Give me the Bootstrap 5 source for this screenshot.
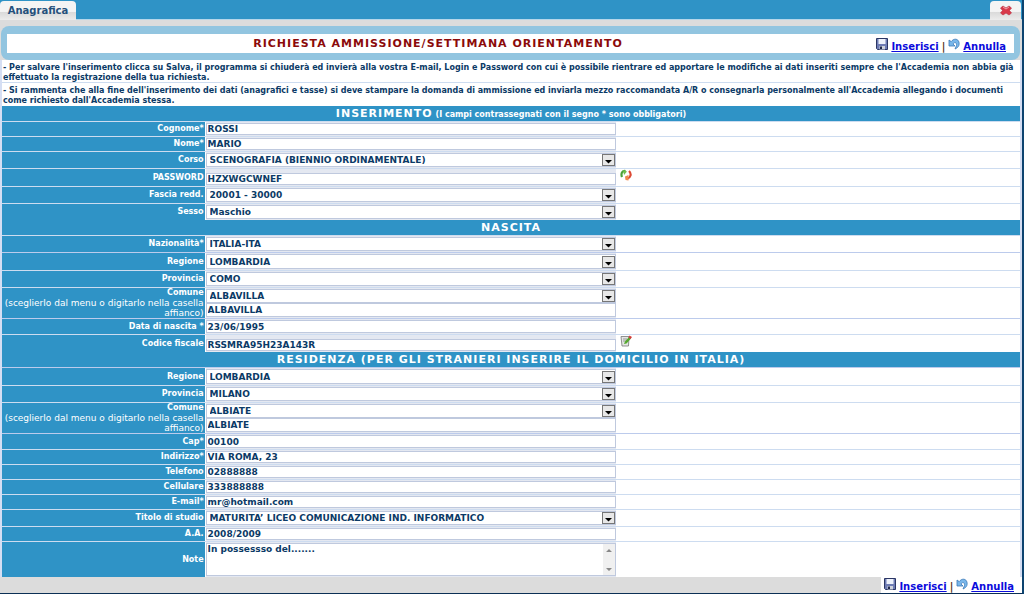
<!DOCTYPE html>
<html lang="it">
<head>
<meta charset="utf-8">
<meta name="viewport" content="width=device-width, initial-scale=1">
<title>Anagrafica</title>
<link href="https://cdn.jsdelivr.net/npm/bootstrap@5.3.0/dist/css/bootstrap.min.css" rel="stylesheet">
<style>
:root { --blue: #2f93c6; --rule: #cddcf0; --ink: #0b3a66; }
body { background: #dcdcdc; color: var(--ink); font: bold 9px/10px "DejaVu Sans", Verdana, sans-serif; }
.shell { border-right: 2px solid #0d4470; border-bottom: 2px solid #0b2f55; }
.topbar { background: var(--blue); height: 20px; border-bottom: 1px solid #b4d6ea; }
.tab-btn { height: 19px; margin-top: 1px; border: 0; border-radius: 4px 4px 0 0; background: linear-gradient(#f4f4f4 0 55%, #dadada 60%, #ececec); color: #24507c; font-weight: bold; font-size: 10px; line-height: 12px; }
.tab-page { width: 76px; }
.tab-close { width: 31px; margin-right: 1px; }
.title-frame { background: #92c5e0; border-radius: 8px; margin: 6px 2px 0 1px; padding: 8px 6px 7px; }
.title-box { background: #fff; height: 19px; display: grid; grid-template-columns: 1fr 145px; align-items: center; }
.title-box h1 { color: #8b0a0a; font-size: 11px; line-height: 14px; letter-spacing: 1px; font-weight: bold; }
.title-box .actions { align-self: end; }
.sheet { background: #fff; border: solid #d5def3; border-width: 0 2px; }
.notice { padding: 3px 1px 0; height: 23px; font-size: 8px; border-bottom: 1px solid var(--rule); }
.notice:last-of-type { border-bottom: 0; }
.section-bar { background: var(--blue); color: #fff; height: 15px; font-size: 8px; line-height: 15px; font-weight: bold; }
.section-bar b { font-size: 11px; letter-spacing: 1px; }
.section-bar small { font-size: 8px; }
.frow { display: grid; grid-template-columns: 20% calc(40% + 3px) 1fr; min-height: 15px; border-top: 1px solid var(--rule); }
.frow-pick { min-height: 17px; }
.frow > label { background: var(--blue); color: #fff; display: flex; flex-direction: column; justify-content: center; text-align: right; padding-right: 1px; margin-right: 1px; font-size: 8px; }
.frow > label span { font-weight: normal; font-size: 9px; }
.fcell { background: #e4e8f1; padding: 1px 0; display: flex; flex-direction: column; }
.fcell > * { flex: 1 1 0; min-height: 12px; width: 100%; border: 1px solid #bfc9de; border-radius: 0; background-color: #fff; color: var(--ink); font: bold 9px/10px "DejaVu Sans", Verdana, sans-serif; padding: 0 1px; outline: 0; }
.fcell > select { appearance: none; padding: 0 16px 0 3px; background: #fff url("data:image/svg+xml,%3Csvg xmlns='http://www.w3.org/2000/svg' width='13' height='12'%3E%3Crect x='.5' y='.5' width='12' height='11' fill='%23e8e8e8' stroke='%23777'/%3E%3Cpath d='M3 6h7L6.500 9.500z' fill='%23000'/%3E%3C/svg%3E") no-repeat right center; }
.fcell > textarea { flex: none; display: block; resize: none; overflow: hidden; height: 33px; background: url("data:image/svg+xml,%3Csvg xmlns='http://www.w3.org/2000/svg' width='12' height='31'%3E%3Cpath d='M0 0h12v31H0z' fill='%23f0f0f0'/%3E%3Cpath d='M3 8h6L6 5zM3 24h6l-3 3z' fill='%23888'/%3E%3C/svg%3E") no-repeat right center #fff; }
.group-box { border: 1px solid #bccbec; border-width: 1px 0; }
.group-box .frow:first-child { border-top: 0; }
.side-btn { border: 0; background: none; padding: 0; margin-left: 4px; line-height: 0; justify-self: start; align-self: start; }
.actions { background: #fff; font-size: 10px; line-height: 12px; gap: 3px; color: #532; }
.actions a { color: #0b0bdc; text-decoration: underline; }
.actions svg { margin-bottom: 3px; }
.footer-bar { height: 16px; }
.footer-bar .actions { padding: 1px 8px 0 3px; }
</style>
</head>
<body>
<svg class="d-none">
  <symbol id="disk" viewBox="0 0 12 12"><path d="M.5.500h11v11H1.500l-1-1z" fill="#6e7cb4" stroke="#2b3664"/><path d="M2.500 1h7v5h-7z" fill="#eef2fb"/><path d="M3.500 8h5.500v3.500H3.500z" fill="#cfd3dc"/><path d="M4 8.500h2v2.500H4z" fill="#20284c"/></symbol>
  <symbol id="undo" viewBox="0 0 12 12"><path d="M1 2v6h6L5 6c1.500-2.500 4-1.500 3.500 1.500L7 11c4-1.500 5-5 3.500-8C9 .5 5.500.500 3.200 3.600z" fill="#79b7ea" stroke="#3a78b8" stroke-width=".8"/></symbol>
</svg>
<div class="shell">
  <header class="topbar d-flex justify-content-between">
    <button type="button" class="tab-btn tab-page p-0">Anagrafica</button>
    <button type="button" class="tab-btn tab-close p-0" aria-label="Chiudi">
      <svg width="12" height="11" viewBox="0 0 12 11"><path d="M3 1l3 2 3-2 2.500 2-2 2.500 2 2.500L9 10 6 8l-3 2-2.500-2 2-2.500-2-2.500z" fill="#d9394a" stroke="#b82c3c" stroke-width=".6"/><path d="M3 2l3 2 3-2" stroke="#f3a0a6" fill="none"/></svg>
    </button>
  </header>
  <main>
    <div class="title-frame">
      <div class="title-box">
        <h1 class="m-0 text-center">RICHIESTA AMMISSIONE/SETTIMANA ORIENTAMENTO</h1>
        <div class="actions d-flex align-items-end justify-content-end pe-2">
          <svg width="12" height="12"><use href="#disk"/></svg><a href="#">Inserisci</a>|<svg width="12" height="12"><use href="#undo"/></svg><a href="#">Annulla</a>
        </div>
      </div>
    </div>
    <form class="sheet" onsubmit="return false">
      <p class="notice m-0">- Per salvare l'inserimento clicca su Salva, il programma si chiuderà ed invierà alla vostra E-mail, Login e Password con cui è possibile rientrare ed apportare le modifiche ai dati inseriti sempre che l'Accademia non abbia già effettuato la registrazione della tua richiesta.</p>
      <p class="notice m-0">- Si rammenta che alla fine dell'inserimento dei dati (anagrafici e tasse) si deve stampare la domanda di ammissione ed inviarla mezzo raccomandata A/R o consegnarla personalmente all'Accademia allegando i documenti come richiesto dall'Accademia stessa.</p>
      <h2 class="section-bar m-0 text-center"><b>INSERIMENTO</b> <small>(I campi contrassegnati con il segno * sono obbligatori)</small></h2>
      <div class="frow"><label for="cognome">Cognome*</label><div class="fcell"><input id="cognome" value="ROSSI"></div></div>
      <div class="frow"><label for="nome">Nome*</label><div class="fcell"><input id="nome" value="MARIO"></div></div>
      <div class="frow frow-pick"><label for="corso">Corso</label><div class="fcell"><select id="corso"><option>SCENOGRAFIA (BIENNIO ORDINAMENTALE)</option></select></div></div>
      <div class="frow frow-pick"><label for="pwd">PASSWORD</label><div class="fcell pt-1"><input id="pwd" value="HZXWGCWNEF"></div>
        <button type="button" class="side-btn" aria-label="Rigenera password"><svg width="12" height="12" viewBox="0 0 12 12" fill="none"><path d="M2 8C.5 4 2.500 1.500 5.500 2" stroke="#4ba33c" stroke-width="2.200"/><path d="M3 1l4 1.500L4 6z" fill="#6fbf4c"/><path d="M9 2C12 5 10.500 8.500 7.500 9.500" stroke="#dd4a35" stroke-width="2.200"/><path d="M5 7.500L8.500 6v5.500L5.500 11z" fill="#ef8a4e"/></svg></button></div>
      <div class="frow frow-pick"><label for="fascia">Fascia redd.</label><div class="fcell"><select id="fascia"><option>20001 - 30000</option></select></div></div>
      <div class="frow frow-pick"><label for="sesso">Sesso</label><div class="fcell"><select id="sesso"><option>Maschio</option></select></div></div>
      <h2 class="section-bar m-0 text-center"><b>NASCITA</b></h2>
      <div class="frow frow-pick"><label for="naz">Nazionalità*</label><div class="fcell"><select id="naz"><option>ITALIA-ITA</option></select></div></div>
      <div class="group-box">
        <div class="frow frow-pick"><label for="nreg">Regione</label><div class="fcell"><select id="nreg"><option>LOMBARDIA</option></select></div></div>
        <div class="frow frow-pick"><label for="nprov">Provincia</label><div class="fcell"><select id="nprov"><option>COMO</option></select></div></div>
        <div class="frow"><label for="ncom">Comune<span>(sceglierlo dal menu o digitarlo nella casella affianco)</span></label><div class="fcell"><select id="ncom"><option>ALBAVILLA</option></select><input aria-label="Comune di nascita" value="ALBAVILLA"></div></div>
      </div>
      <div class="frow border-0"><label for="data">Data di nascita *</label><div class="fcell"><input id="data" value="23/06/1995"></div></div>
      <div class="frow frow-pick"><label for="cf">Codice fiscale</label><div class="fcell pt-1"><input id="cf" value="RSSMRA95H23A143R"></div>
        <button type="button" class="side-btn" aria-label="Calcola codice fiscale"><svg width="12" height="12" viewBox="0 0 12 12"><path d="M1 1.500h8l-.5 9.500H2z" fill="#e4e6e4" stroke="#777" stroke-width=".8"/><path d="M3 4h4M3 6h3" stroke="#999"/><path d="M4 9l1-2.500L9 2l2 1.500L6.500 8.500z" fill="#55a82f"/><path d="M8.500 2.500l1-2 2.500 1.500-1.500 2z" fill="#d33b3b"/></svg></button></div>
      <h2 class="section-bar m-0 text-center"><b>RESIDENZA (PER GLI STRANIERI INSERIRE IL DOMICILIO IN ITALIA)</b></h2>
      <div class="group-box">
        <div class="frow frow-pick"><label for="rreg">Regione</label><div class="fcell"><select id="rreg"><option>LOMBARDIA</option></select></div></div>
        <div class="frow frow-pick"><label for="rprov">Provincia</label><div class="fcell"><select id="rprov"><option>MILANO</option></select></div></div>
        <div class="frow"><label for="rcom">Comune<span>(sceglierlo dal menu o digitarlo nella casella affianco)</span></label><div class="fcell"><select id="rcom"><option>ALBIATE</option></select><input aria-label="Comune di residenza" value="ALBIATE"></div></div>
      </div>
      <div class="frow border-0"><label for="cap">Cap*</label><div class="fcell"><input id="cap" value="00100"></div></div>
      <div class="frow"><label for="ind">Indirizzo*</label><div class="fcell"><input id="ind" value="VIA ROMA, 23"></div></div>
      <div class="frow"><label for="tel">Telefono</label><div class="fcell"><input id="tel" value="02888888"></div></div>
      <div class="frow"><label for="cell">Cellulare</label><div class="fcell"><input id="cell" value="333888888"></div></div>
      <div class="frow"><label for="mail">E-mail*</label><div class="fcell"><input id="mail" value="mr@hotmail.com"></div></div>
      <div class="frow frow-pick"><label for="titolo">Titolo di studio</label><div class="fcell"><select id="titolo"><option>MATURITA’ LICEO COMUNICAZIONE IND. INFORMATICO</option></select></div></div>
      <div class="frow"><label for="aa">A.A.</label><div class="fcell"><input id="aa" value="2008/2009"></div></div>
      <div class="frow"><label for="note">Note</label><div class="fcell"><textarea id="note">In possessso del.......</textarea></div></div>
    </form>
  </main>
  <footer class="footer-bar d-flex justify-content-end">
    <div class="actions d-flex align-items-end">
      <svg width="12" height="12"><use href="#disk"/></svg><a href="#">Inserisci</a>|<svg width="12" height="12"><use href="#undo"/></svg><a href="#">Annulla</a>
    </div>
  </footer>
</div>
<script src="https://cdn.jsdelivr.net/npm/bootstrap@5.3.0/dist/js/bootstrap.bundle.min.js"></script>
</body>
</html>
